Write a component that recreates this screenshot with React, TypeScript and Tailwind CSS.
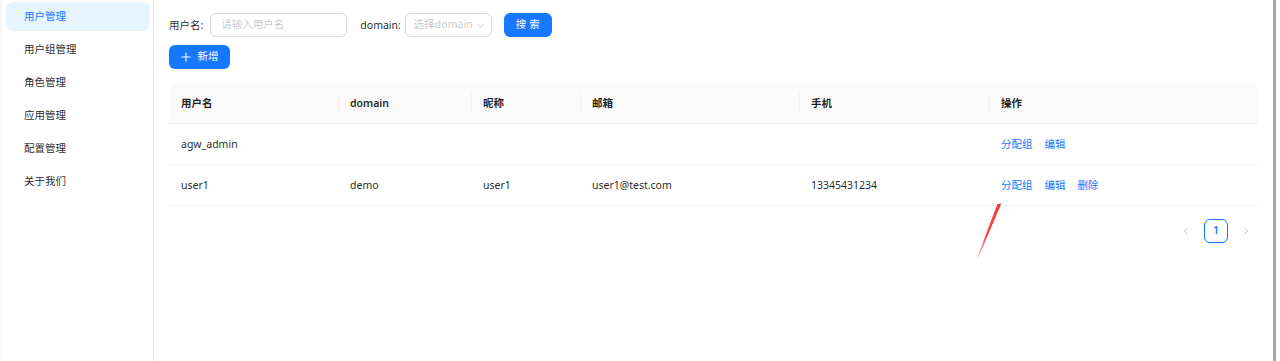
import React from "react";

const font = { fontFamily: '"Noto Sans", "Noto Sans CJK SC", sans-serif' };

const menu = ["用户管理", "用户组管理", "角色管理", "应用管理", "配置管理", "关于我们"];

const cols = [
  { title: "用户名", w: "w-[169px]" },
  { title: "domain", w: "w-[133px]" },
  { title: "昵称", w: "w-[109px]" },
  { title: "邮箱", w: "w-[219px]" },
  { title: "手机", w: "w-[190px]" },
  { title: "操作", w: "w-[269px]" },
];

const rows = [
  { cells: ["agw_admin", "", "", "", ""], ops: ["分配组", "编辑"] },
  { cells: ["user1", "demo", "user1", "user1@test.com", "13345431234"], ops: ["分配组", "编辑", "删除"] },
];

export default function App() {
  return (
    <div
      className="flex h-[361px] w-[1280px] bg-white text-[10.5px] text-[rgba(0,0,0,0.88)] overflow-hidden"
      style={font}
    >
      {/* sidebar */}
      <div className="w-[154px] shrink-0 border-r border-[#ececec] border-l-2 border-l-[#f7f7f7] pt-[2px] flex flex-col gap-[4px]">
        {menu.map((m, i) => (
          <div
            key={m}
            className={
              "ml-[4px] w-[144px] h-[29px] rounded-[7px] flex items-center pl-[18px] pt-[1px] " +
              (i === 0 ? "bg-[#e6f4ff] text-[#1677ff]" : "")
            }
          >
            {m}
          </div>
        ))}
      </div>

      {/* main */}
      <div className="relative flex-1 px-[15px] pt-[13px]">
        <div className="flex items-center h-[24px]">
          <span className="pt-[1px]">用户名:</span>
          <div className="ml-[7px] w-[137px] h-[24px] border border-[#d9d9d9] rounded-[6px] flex items-center pl-[10px] text-[rgba(0,0,0,0.25)]">
            请输入用户名
          </div>
          <span className="ml-[13px] pt-[1px]">domain:</span>
          <div className="ml-[4px] w-[87px] h-[24px] border border-[#d9d9d9] rounded-[6px] flex items-center pl-[8px] pr-[6px] justify-between text-[rgba(0,0,0,0.25)]">
            <span>选择domain</span>
            <svg width="9" height="9" viewBox="0 0 10 10" fill="none">
              <path d="M1.5 3.5 L5 7 L8.5 3.5" stroke="rgba(0,0,0,0.25)" strokeWidth="1" />
            </svg>
          </div>
          <div className="ml-[12px] w-[48px] h-[24px] rounded-[6px] bg-[#1677ff] text-white flex items-center justify-center tracking-[3px] pl-[3px]">
            搜索
          </div>
        </div>

        <div className="mt-[8px] w-[61px] h-[24px] rounded-[6px] bg-[#1677ff] text-white flex items-center justify-center gap-[7px]">
          <svg width="10" height="10" viewBox="0 0 10 10">
            <path d="M5 0.5 V9.5 M0.5 5 H9.5" stroke="white" strokeWidth="1.1" />
          </svg>
          <span>新增</span>
        </div>

        {/* table */}
        <div className="mt-[14px] w-[1089px]">
          <div className="flex h-[41px] bg-[#fafafa] rounded-t-[8px] border-b border-[#f0f0f0] font-semibold">
            {cols.map((c, i) => (
              <div key={c.title} className={c.w + " relative flex items-center pl-[12px] pt-[2px]"}>
                {i > 0 && (
                  <div className="absolute left-0 top-[10px] h-[20px] w-px bg-[#f0f0f0]" />
                )}
                {c.title}
              </div>
            ))}
          </div>
          {rows.map((r, ri) => (
            <div key={ri} className="flex h-[41px] border-b border-[#f0f0f0]">
              {r.cells.map((c, ci) => (
                <div key={ci} className={cols[ci].w + " flex items-center pl-[12px] pt-[2px]"}>
                  {c}
                </div>
              ))}
              <div className="w-[269px] flex items-center pl-[12px] pt-[2px] gap-[12px] text-[#1677ff]">
                {r.ops.map((o) => (
                  <span key={o}>{o}</span>
                ))}
              </div>
            </div>
          ))}
        </div>

        {/* pagination */}
        <div className="mt-[13px] w-[1089px] flex justify-end items-center gap-[6px]">
          <div className="w-[24px] h-[24px] flex items-center justify-center">
            <svg width="8" height="8" viewBox="0 0 8 8" fill="none">
              <path d="M5.5 0.8 L2.3 4 L5.5 7.2" stroke="rgba(0,0,0,0.25)" strokeWidth="1" />
            </svg>
          </div>
          <div className="w-[24px] h-[24px] rounded-[6px] border border-[#1677ff] text-[#1677ff] font-semibold flex items-center justify-center">
            1
          </div>
          <div className="w-[24px] h-[24px] flex items-center justify-center">
            <svg width="8" height="8" viewBox="0 0 8 8" fill="none">
              <path d="M2.5 0.8 L5.7 4 L2.5 7.2" stroke="rgba(0,0,0,0.25)" strokeWidth="1" />
            </svg>
          </div>
        </div>

        {/* red annotation arrow */}
        <svg className="absolute left-[822px] top-[202px]" width="26" height="58" viewBox="0 0 26 58" fill="none">
          <defs>
            <linearGradient id="rg" x1="24" y1="2" x2="2" y2="56" gradientUnits="userSpaceOnUse">
              <stop offset="0" stopColor="#ff1f1f" stopOpacity="1" />
              <stop offset="0.6" stopColor="#ff2a2a" stopOpacity="0.9" />
              <stop offset="1" stopColor="#ff4040" stopOpacity="0.1" />
            </linearGradient>
          </defs>
          <path d="M25 2 L22.5 3 L1.5 56 L2.2 56 Z" fill="url(#rg)" />
          <path d="M25 2 L21.8 2.8 L2 55" stroke="url(#rg)" strokeWidth="1.2" />
        </svg>
      </div>

      {/* right edge bar */}
      <div className="w-[3px] shrink-0 bg-[#a6a6a6]" />
      <div className="w-[4px] shrink-0 bg-white" />
    </div>
  );
}
